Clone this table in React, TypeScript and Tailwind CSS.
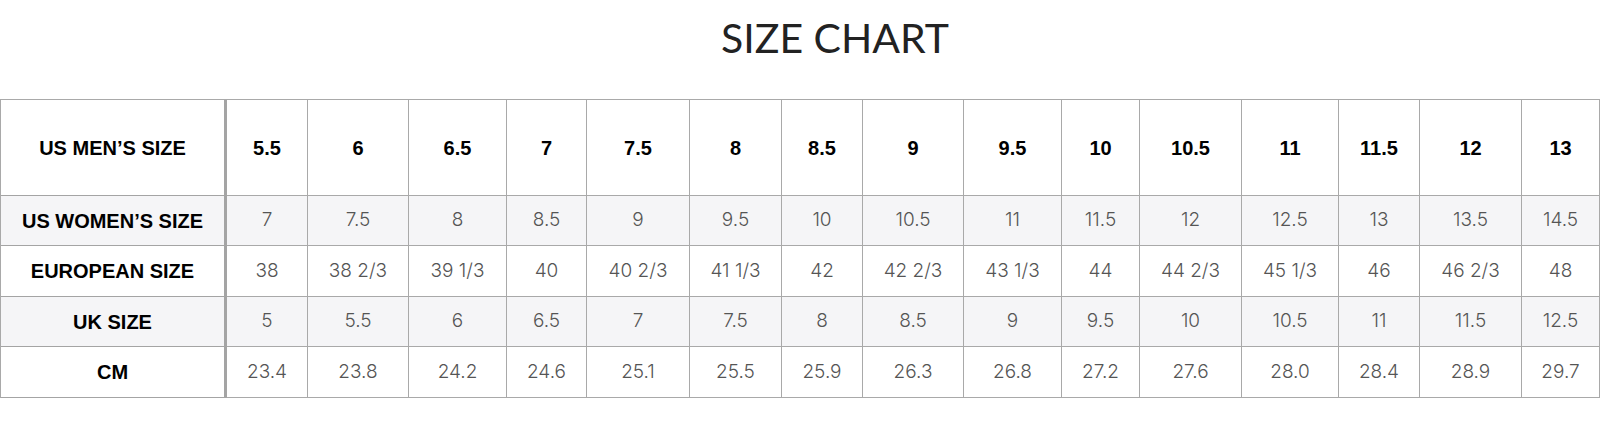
const men = ["5.5", "6", "6.5", "7", "7.5", "8", "8.5", "9", "9.5", "10", "10.5", "11", "11.5", "12", "13"];

const rows = [
  { label: "US WOMEN’S SIZE", shade: true, values: ["7", "7.5", "8", "8.5", "9", "9.5", "10", "10.5", "11", "11.5", "12", "12.5", "13", "13.5", "14.5"] },
  { label: "EUROPEAN SIZE", shade: false, values: ["38", "38 2/3", "39 1/3", "40", "40 2/3", "41 1/3", "42", "42 2/3", "43 1/3", "44", "44 2/3", "45 1/3", "46", "46 2/3", "48"] },
  { label: "UK SIZE", shade: true, values: ["5", "5.5", "6", "6.5", "7", "7.5", "8", "8.5", "9", "9.5", "10", "10.5", "11", "11.5", "12.5"] },
  { label: "CM", shade: false, values: ["23.4", "23.8", "24.2", "24.6", "25.1", "25.5", "25.9", "26.3", "26.8", "27.2", "27.6", "28.0", "28.4", "28.9", "29.7"] },
];

const bold = "font-['Liberation_Sans',Arial,sans-serif] font-bold text-[20px] text-black";
const light = "font-['Inter',sans-serif] font-light text-[19px] text-[#555]";

export default function App() {
  return (
    <div className="w-[1600px] h-[426px] bg-white overflow-hidden">
      <div className="h-[99px] flex justify-center pl-[70px] pt-[17px]">
        <h1 className="font-['Lato',sans-serif] font-normal text-[41px] leading-none text-[#222]">SIZE CHART</h1>
      </div>

      <div className="grid grid-cols-[226px_81px_101px_98px_80px_103px_92px_81px_101px_98px_78px_102px_97px_81px_102px_78px] w-[1600px] border-l border-t border-[#a9a9a9]">
        <div className={`h-[96px] flex items-center justify-center border-r-[3px] border-b border-[#a4a4a4] ${bold}`}>US MEN’S SIZE</div>
        {men.map((m) => (
          <div key={m} className={`h-[96px] flex items-center justify-center border-r border-b border-[#a9a9a9] ${bold}`}>{m}</div>
        ))}

        {rows.map((row, i) => (
          <div key={row.label} className="contents">
            <div className={`${i % 2 === 0 ? "h-[50px]" : "h-[51px]"} ${row.shade ? "bg-[#f5f5f7]" : "bg-white"} flex items-center justify-center border-r-[3px] border-b border-[#a4a4a4] ${bold}`}>
              {row.label}
            </div>
            {row.values.map((v, j) => (
              <div key={j} className={`${i % 2 === 0 ? "h-[50px]" : "h-[51px]"} ${row.shade ? "bg-[#f5f5f7]" : "bg-white"} flex items-center justify-center border-r border-b border-[#a9a9a9] ${light}`}>
                {v}
              </div>
            ))}
          </div>
        ))}
      </div>
    </div>
  );
}
